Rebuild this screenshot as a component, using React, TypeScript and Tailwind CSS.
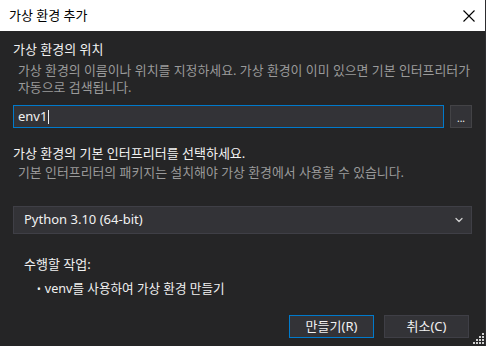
import { ChevronDown } from "lucide-react";

const font = { fontFamily: '"Segoe UI", "Noto Sans", "Noto Sans CJK KR", sans-serif' };

export default function App() {
  return (
    <div
      style={font}
      className="w-[486px] h-[346px] bg-[#252526] text-[12px] text-[#f1f1f1] flex flex-col border-r border-[#2d2d30] overflow-hidden"
    >
      {/* Title bar */}
      <div className="h-[31px] bg-white flex items-center justify-between pl-[9px] pr-[9px] shrink-0">
        <span className="text-[13px] text-black">가상 환경 추가</span>
        <svg width="12" height="12" viewBox="0 0 12 12" className="mr-px">
          <path d="M0.5 0.5 L11.5 11.5 M11.5 0.5 L0.5 11.5" stroke="#000" strokeWidth="1.1" />
        </svg>
      </div>

      <div className="flex-1 flex flex-col pl-[13px] pr-[12px] relative">
        {/* Location */}
        <p className="mt-[9px] text-[13px] leading-[18px]">가상 환경의 위치</p>
        <p className="mt-[4px] pl-[5px] text-[12.9px] text-[#9a9a9a] leading-[17px]">
          가상 환경의 이름이나 위치를 지정하세요. 가상 환경이 이미 있으면 기본 인터프리터가 자동으로 검색됩니다.
        </p>
        <div className="mt-[9px] flex items-center gap-[6px] pr-px">
          <div className="h-[23px] flex-1 bg-[#333337] border border-[#007acc] flex items-center pl-[4px] text-[13px]">
            env1<span className="w-px h-[14px] bg-[#f1f1f1] ml-px" />
          </div>
          <div className="w-[22px] h-[23px] bg-[#333337] border border-[#434346] flex items-end justify-center pb-[4px] text-[10px] leading-none">
            ...
          </div>
        </div>

        {/* Interpreter */}
        <p className="mt-[16px] text-[13px] leading-[18px]">가상 환경의 기본 인터프리터를 선택하세요.</p>
        <p className="mt-[2px] pl-[5px] text-[12.9px] text-[#9a9a9a] leading-[17px]">
          기본 인터프리터의 패키지는 설치해야 가상 환경에서 사용할 수 있습니다.
        </p>
        <div className="mt-[25px] mr-px h-[28px] bg-[#333337] border border-[#3f3f46] flex items-center justify-between pl-[10px] pr-[6px] text-[13px]">
          <span>Python 3.10 (64-bit)</span>
          <ChevronDown size={12} strokeWidth={2.5} className="text-[#d0d0d0]" />
        </div>

        {/* Actions */}
        <p className="mt-[21px] pl-[11px] text-[13px] leading-[18px]">수행할 작업:</p>
        <p className="mt-[7px] pl-[24px] text-[12.6px] leading-[18px]">
          <span className="mr-[4px] text-[10px]">•</span>venv를 사용하여 가상 환경 만들기
        </p>

        <div className="mt-[17px] flex justify-end gap-[10px] pr-[4px]">
          <div className="w-[85px] h-[23px] bg-[#333337] border border-[#007acc] flex items-center justify-center text-[13px]">
            만들기(R)
          </div>
          <div className="w-[85px] h-[23px] bg-[#333337] border border-[#3f3f46] flex items-center justify-center text-[13px]">
            취소(C)
          </div>
        </div>

        {/* Resize grip */}
        <svg className="absolute right-[1px] bottom-[2px]" width="11" height="11" viewBox="0 0 11 11">
          {[
            [9, 1], [9, 4], [6, 4], [9, 7], [6, 7], [3, 7], [9, 10], [6, 10], [3, 10], [0, 10],
          ].map(([x, y], i) => (
            <rect key={i} x={x} y={y - 1} width="2" height="2" fill="#d0d0d0" />
          ))}
        </svg>
      </div>
    </div>
  );
}
